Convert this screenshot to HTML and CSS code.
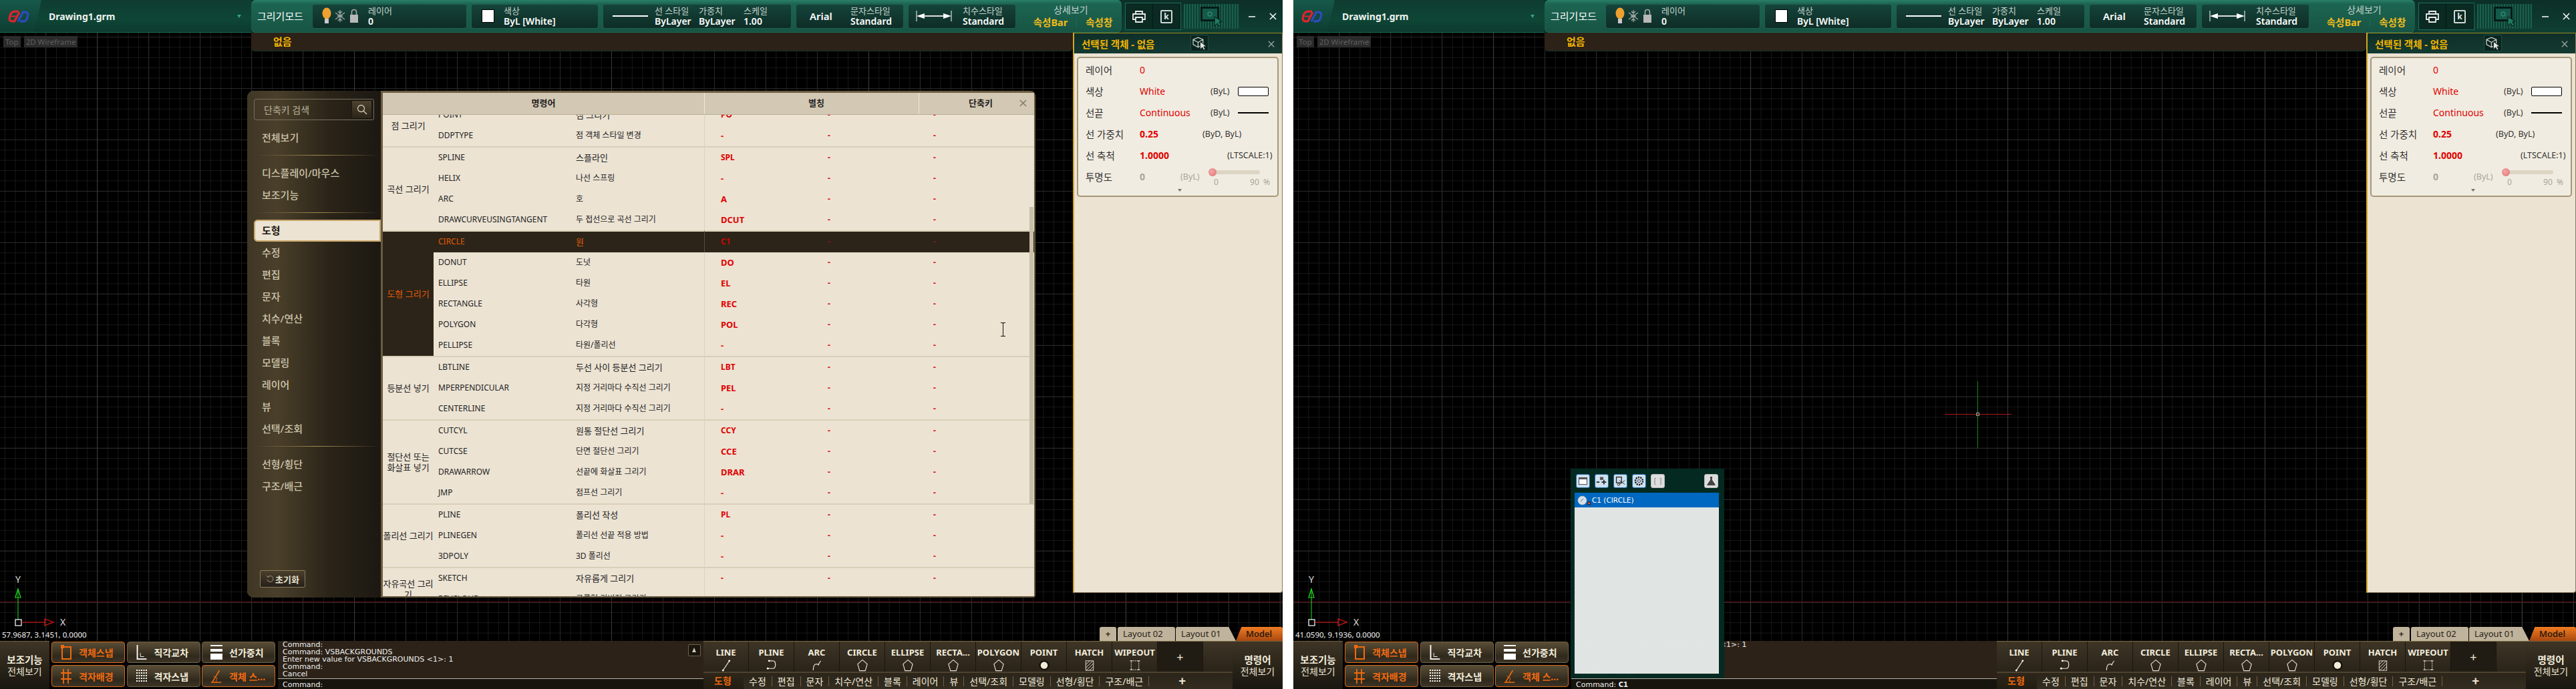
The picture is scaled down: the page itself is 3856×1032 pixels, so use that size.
FILE: index.html
```html
<!DOCTYPE html>
<html lang="ko">
<head>
    <meta charset="UTF-8">
    <title>Drawing1.grm</title>
    <link rel="stylesheet" href="styles.css">
</head>
<body>

<svg class="defs" width="0" height="0">
    <symbol id="i-logo" viewBox="0 0 30 18">
        <path d="M15 2 H10 Q5 2 3 7 L2 11 Q1 16 6 16 H9 L16 3" fill="none" stroke="#e0242c" stroke-width="3"/>
        <path d="M14 16 L21 3 H24 Q29 3 28 8 L27 11 Q26 16 21 16 H17" fill="none" stroke="#2c4cc0" stroke-width="3"/>
        <path d="M4 9 H11" stroke="#e0242c" stroke-width="2"/>
    </symbol>
    <symbol id="i-bulb" viewBox="0 0 14 26">
        <ellipse cx="7" cy="9" rx="6.5" ry="8.5" fill="#f0a030"/>
        <rect x="4" y="17" width="6" height="7" fill="#c9c9c9"/>
    </symbol>
    <symbol id="i-snow" viewBox="0 0 16 20">
        <path d="M8 1 V19 M1 5 L15 15 M15 5 L1 15 M4 10 H12 M5 3 L8 6 L11 3 M5 17 L8 14 L11 17" stroke="#a0a8a4" stroke-width="1.3" fill="none"/>
    </symbol>
    <symbol id="i-lock" viewBox="0 0 14 22">
        <path d="M3.5 10 V5 Q3.5 1.5 7 1.5 Q10.5 1.5 10.5 5 V10" stroke="#a8a8a8" stroke-width="1.6" fill="none"/>
        <rect x="1" y="9" width="12" height="12" fill="#b8b8b8"/>
    </symbol>
    <symbol id="i-dim" viewBox="0 0 54 16">
        <path d="M1 0 V16 M53 0 V16" stroke="#fff" stroke-width="1"/>
        <path d="M1 8 L13 4 V12 Z M53 8 L41 4 V12 Z" fill="#fff"/>
        <path d="M12 8 H42" stroke="#ddd" stroke-width="2"/>
    </symbol>
    <symbol id="i-print" viewBox="0 0 20 18">
        <path d="M5 5 V1 H15 V5 M5 13 H1 V5 H19 V13 H15 M5 10 H15 V17 H5 Z" fill="none" stroke="#e8e8e8" stroke-width="1.8"/>
    </symbol>
    <symbol id="i-pick" viewBox="0 0 32 30">
        <rect x="1.5" y="1.5" width="25" height="19" fill="#15594a" stroke="#04140f" stroke-width="2.6"/>
        <circle cx="14" cy="11" r="3" fill="none" stroke="#2c8a70" stroke-width="1.4"/>
        <path d="M21 15 V29 L25 25 L28 29 L31 27 L27.5 23 L32 22 Z" fill="#1d7a62" stroke="#04140f"/>
    </symbol>
    <symbol id="i-x" viewBox="0 0 12 12">
        <path d="M1 1 L11 11 M11 1 L1 11" stroke="currentColor" stroke-width="1.6" fill="none"/>
    </symbol>
    <symbol id="i-cube" viewBox="0 0 20 20">
        <path d="M8 2 L15 5 V12 L8 16 L1 12 V5 Z M1 5 L8 9 L15 5 M8 9 V16" fill="none" stroke="#c8d0cc" stroke-width="1.2"/>
        <path d="M11 8 V19 L14 16 L16 20 L18 19 L16 15 L20 15 Z" fill="#e8e8e8" stroke="#0a241e" stroke-width=".8"/>
    </symbol>
    <symbol id="i-search" viewBox="0 0 16 16">
        <circle cx="6.5" cy="6.5" r="5" fill="none" stroke="#cfc6ad" stroke-width="1.3"/>
        <path d="M10 10 L15 15" stroke="#cfc6ad" stroke-width="1.5"/>
    </symbol>
    <symbol id="i-reset" viewBox="0 0 12 12">
        <path d="M3 3 A4.5 4.5 0 1 1 2 7 M1 1 L3 3.5 L5.5 2.5" fill="none" stroke="#8a7f66" stroke-width="1.1"/>
    </symbol>
    <symbol id="i-osnap" viewBox="0 0 18 24">
        <rect x="3" y="4" width="13" height="18" fill="none" stroke="#ef6a10" stroke-width="2"/>
        <rect x="1" y="1" width="5" height="5" fill="#ef6a10"/>
    </symbol>
    <symbol id="i-ortho" viewBox="0 0 18 26">
        <path d="M2 1 V24 H17" fill="none" stroke="#fff" stroke-width="2"/>
        <path d="M7 14 V20 H13" fill="none" stroke="#fff"/>
    </symbol>
    <symbol id="i-weight" viewBox="0 0 18 24">
        <rect x="0" y="1" width="18" height="2" fill="#fff"/>
        <rect x="0" y="7" width="18" height="4" fill="#fff"/>
        <rect x="0" y="14" width="18" height="9" fill="#fff"/>
    </symbol>
    <symbol id="i-gridbg" viewBox="0 0 18 24">
        <path d="M5 1 V23 M12 1 V23 M1 7 H17 M1 16 H17" stroke="#ef6a10" stroke-width="1.8"/>
    </symbol>
    <symbol id="i-gridsnap" viewBox="0 0 18 24">
        <path d="M1 3 H17 M1 7 H17 M1 11 H17 M1 15 H17 M1 19 H17" stroke="#fff" stroke-width="1.8" stroke-dasharray="2 1.5"/>
    </symbol>
    <symbol id="i-angle" viewBox="0 0 20 24">
        <path d="M1 22 H18 M3 22 L15 2" fill="none" stroke="#ef6a10" stroke-width="1.8"/>
        <path d="M5 12 L11 15 L9 22" fill="none" stroke="#ef6a10"/>
    </symbol>
    <symbol id="i-line" viewBox="0 0 16 20">
        <path d="M3 18 L13 3" stroke="#e8e2d2" stroke-width="1.2"/>
        <circle cx="3" cy="18" r="1.5" fill="#fff"/><circle cx="13" cy="3" r="1.5" fill="#fff"/>
    </symbol>
    <symbol id="i-pline" viewBox="0 0 18 20">
        <path d="M5 3 H11 Q15 3 15 9 Q15 15 11 15 H3" fill="none" stroke="#e8e2d2" stroke-width="1.3"/>
        <circle cx="3" cy="15" r="1.5" fill="#fff"/><circle cx="5" cy="3" r="1.5" fill="#fff"/>
    </symbol>
    <symbol id="i-arc" viewBox="0 0 18 20">
        <path d="M3 18 Q3 8 8 8 Q11 8 11 10 Q12 6 15 3" fill="none" stroke="#e8e2d2" stroke-width="1.2"/>
    </symbol>
    <symbol id="i-penta" viewBox="0 0 18 20">
        <path d="M9 1.5 L16.5 8 L13.5 18.5 H4.5 L1.5 8 Z" fill="none" stroke="#e8e2d2" stroke-width="1.2"/>
    </symbol>
    <symbol id="i-point" viewBox="0 0 18 20">
        <circle cx="9" cy="10" r="8" fill="#14110b"/><circle cx="9" cy="10" r="5.5" fill="#f0ecd8"/>
    </symbol>
    <symbol id="i-hatch" viewBox="0 0 18 20">
        <rect x="3" y="3" width="12" height="15" fill="none" stroke="#e8e2d2"/>
        <path d="M3 9 L9 3 M3 14 L14 3 M4 18 L15 7 M9 18 L15 12" stroke="#e8e2d2"/>
    </symbol>
    <symbol id="i-wipe" viewBox="0 0 18 20">
        <rect x="3" y="3" width="12" height="14" fill="none" stroke="#e8e2d2" stroke-dasharray="2 1"/>
        <path d="M1 3 H5 M13 3 H17 M1 17 H5 M13 17 H17" stroke="#fff"/>
    </symbol>
    <symbol id="i-ucs" viewBox="0 0 100 84">
        <path d="M12 24 V69" stroke="#20e020"/>
        <path d="M12 23 L8 36 H16 Z" fill="none" stroke="#20e020" stroke-width="1.2"/>
        <rect x="8" y="69" width="9" height="9" fill="none" stroke="#fff" stroke-width="1.2"/>
        <path d="M17 73 H52" stroke="#f01818" stroke-width="1.2"/>
        <path d="M65 73 L52 68 V78 Z" fill="none" stroke="#f01818" stroke-width="1.2"/>
    </symbol>
</svg>

<div class="win win-a">
    <header class="topbar">
        <div class="doc">
            <div class="doc-logo"><svg class="logo"><use href="#i-logo"/></svg></div>
            <span class="doc-name">Drawing1.grm</span>
            <span class="doc-caret"></span>
        </div>
        <div class="toolbar">
            <div class="mode">그리기모드</div>
            <div class="card c-layer">
                <svg class="ic-bulb"><use href="#i-bulb"/></svg>
                <svg class="ic-snow"><use href="#i-snow"/></svg>
                <svg class="ic-lock"><use href="#i-lock"/></svg>
                <div class="stack"><small>레이어</small><b>0</b></div>
            </div>
            <div class="card c-color">
                <i class="swatch"></i>
                <div class="stack"><small>색상</small><b>ByL [White]</b></div>
            </div>
            <div class="card c-line">
                <i class="lineprev"></i>
                <div class="stack w66"><small>선 스타일</small><b>ByLayer</b></div>
                <div class="stack w67"><small>가중치</small><b>ByLayer</b></div>
                <div class="stack"><small>스케일</small><b>1.00</b></div>
            </div>
            <div class="card c-text">
                <b class="font-name">Arial</b>
                <div class="stack"><small>문자스타일</small><b>Standard</b></div>
            </div>
            <div class="card c-dim">
                <svg class="ic-dim"><use href="#i-dim"/></svg>
                <div class="stack"><small>치수스타일</small><b>Standard</b></div>
            </div>
            <div class="detail">
                <span>상세보기</span>
                <div class="detail-links"><a>속성Bar</a><i></i><a>속성창</a></div>
            </div>
        </div>
        <div class="winctl">
            <div class="tools">
                <div class="tool"><svg class="ic-print"><use href="#i-print"/></svg></div>
                <div class="tool"><span class="key">k</span></div>
            </div>
            <div class="grip"><svg class="ic-pick"><use href="#i-pick"/></svg></div>
            <svg class="ic-min" viewBox="0 0 10 2"><path d="M0 1 H10" stroke="#fff" stroke-width="1.5"/></svg>
            <svg class="ic-close"><use href="#i-x"/></svg>
        </div>
    </header>

    <main class="stage">
        <div class="subbar">없음</div>
        <div class="viewtags"><span>Top</span><span>2D Wireframe</span></div>
        <div class="redline"></div>
        <svg class="ucs"><use href="#i-ucs"/><text x="12" y="14" text-anchor="middle">Y</text><text x="75" y="78">X</text></svg>
        <div class="coords">57.9687, 3.1451, 0.0000</div>

        <section class="dialog">
            <nav class="side">
                <div class="search"><span>단축키 검색</span><button class="search-btn"><svg><use href="#i-search"/></svg></button></div>
                <a class="side-item first">전체보기</a>
                <hr class="side-div">
                <a class="side-item">디스플레이/마우스</a>
                <a class="side-item">보조기능</a>
                <hr class="side-div">
                <a class="side-item on">도형</a>
                <a class="side-item">수정</a>
                <a class="side-item">편집</a>
                <a class="side-item">문자</a>
                <a class="side-item">치수/연산</a>
                <a class="side-item">블록</a>
                <a class="side-item">모델링</a>
                <a class="side-item">레이어</a>
                <a class="side-item">뷰</a>
                <a class="side-item">선택/조회</a>
                <hr class="side-div">
                <a class="side-item">선형/횡단</a>
                <a class="side-item">구조/배근</a>
                <button class="reset"><svg><use href="#i-reset"/></svg>초기화</button>
            </nav>
            <div class="pane">
                <div class="pane-head"><span>명령어</span><span class="h2">별칭</span><span class="h3">단축키</span></div>
                <svg class="pane-close"><use href="#i-x"/></svg>
                <div class="pane-body">
                    <table class="cmds">
                        <colgroup><col class="c1"><col class="c2"><col class="c3"><col class="c4"><col class="c5"><col class="c6"></colgroup>
                        <tr><td rowspan="2" class="grp">점 그리기</td><td>POINT</td><td>점 그리기</td><td class="al">PO</td><td class="ds">-</td><td class="ds">-</td></tr>
                        <tr><td>DDPTYPE</td><td>점 객체 스타일 변경</td><td class="al">-</td><td class="ds">-</td><td class="ds">-</td></tr>

                        <tr class="gs"><td rowspan="4" class="grp">곡선 그리기</td><td>SPLINE</td><td>스플라인</td><td class="al">SPL</td><td class="ds">-</td><td class="ds">-</td></tr>
                        <tr><td>HELIX</td><td>나선 스프링</td><td class="al">-</td><td class="ds">-</td><td class="ds">-</td></tr>
                        <tr><td>ARC</td><td>호</td><td class="al">A</td><td class="ds">-</td><td class="ds">-</td></tr>
                        <tr><td>DRAWCURVEUSINGTANGENT</td><td>두 접선으로 곡선 그리기</td><td class="al">DCUT</td><td class="ds">-</td><td class="ds">-</td></tr>

                        <tr class="gs sel"><td rowspan="6" class="grp cur">도형 그리기</td><td>CIRCLE</td><td>원</td><td class="al">C1</td><td class="ds">-</td><td class="ds">-</td></tr>
                        <tr><td>DONUT</td><td>도넛</td><td class="al">DO</td><td class="ds">-</td><td class="ds">-</td></tr>
                        <tr><td>ELLIPSE</td><td>타원</td><td class="al">EL</td><td class="ds">-</td><td class="ds">-</td></tr>
                        <tr><td>RECTANGLE</td><td>사각형</td><td class="al">REC</td><td class="ds">-</td><td class="ds">-</td></tr>
                        <tr><td>POLYGON</td><td>다각형</td><td class="al">POL</td><td class="ds">-</td><td class="ds">-</td></tr>
                        <tr><td>PELLIPSE</td><td>타원/폴리선</td><td class="al">-</td><td class="ds">-</td><td class="ds">-</td></tr>

                        <tr class="gs"><td rowspan="3" class="grp">등분선 넣기</td><td>LBTLINE</td><td>두선 사이 등분선 그리기</td><td class="al">LBT</td><td class="ds">-</td><td class="ds">-</td></tr>
                        <tr><td>MPERPENDICULAR</td><td>지정 거리마다 수직선 그리기</td><td class="al">PEL</td><td class="ds">-</td><td class="ds">-</td></tr>
                        <tr><td>CENTERLINE</td><td>지정 거리마다 수직선 그리기</td><td class="al">-</td><td class="ds">-</td><td class="ds">-</td></tr>

                        <tr class="gs"><td rowspan="4" class="grp">절단선 또는<br>화살표 넣기</td><td>CUTCYL</td><td>원통 절단선 그리기</td><td class="al">CCY</td><td class="ds">-</td><td class="ds">-</td></tr>
                        <tr><td>CUTCSE</td><td>단면 절단선 그리기</td><td class="al">CCE</td><td class="ds">-</td><td class="ds">-</td></tr>
                        <tr><td>DRAWARROW</td><td>선끝에 화살표 그리기</td><td class="al">DRAR</td><td class="ds">-</td><td class="ds">-</td></tr>
                        <tr><td>JMP</td><td>점프선 그리기</td><td class="al">-</td><td class="ds">-</td><td class="ds">-</td></tr>

                        <tr class="gs"><td rowspan="3" class="grp">폴리선 그리기</td><td>PLINE</td><td>폴리선 작성</td><td class="al">PL</td><td class="ds">-</td><td class="ds">-</td></tr>
                        <tr><td>PLINEGEN</td><td>폴리선 선끝 적용 방법</td><td class="al">-</td><td class="ds">-</td><td class="ds">-</td></tr>
                        <tr><td>3DPOLY</td><td>3D 폴리선</td><td class="al">-</td><td class="ds">-</td><td class="ds">-</td></tr>

                        <tr class="gs"><td rowspan="2" class="grp">자유곡선 그리기</td><td>SKETCH</td><td>자유롭게 그리기</td><td class="al">-</td><td class="ds">-</td><td class="ds">-</td></tr>
                        <tr><td>REVCLOUD</td><td>구름형 리비전 그리기</td><td class="al">-</td><td class="ds">-</td><td class="ds">-</td></tr>
                    </table>
                </div>
                <div class="scrollbar"></div>
            </div>
        </section>
        <svg class="ibeam" viewBox="0 0 7 21"><path d="M0 .5 H7 M0 20.5 H7 M3.5 0 V21" stroke="#111"/></svg>

        <aside class="props">
            <div class="props-head"><span>선택된 객체 - 없음</span><div class="cube"><svg><use href="#i-cube"/></svg></div><svg class="props-x"><use href="#i-x"/></svg></div>
            <div class="props-card">
                <div class="pr"><label>레이어</label><span class="v">0</span></div>
                <div class="pr"><label>색상</label><span class="v w106">White</span><span class="by w41">(ByL)</span><i class="pr-swatch"></i></div>
                <div class="pr"><label>선끝</label><span class="v w106">Continuous</span><span class="by w41">(ByL)</span><i class="pr-line"></i></div>
                <div class="pr"><label>선 가중치</label><strong class="v w94">0.25</strong><span class="by">(ByD, ByL)</span></div>
                <div class="pr"><label>선 축척</label><strong class="v w131">1.0000</strong><span class="by">(LTSCALE:1)</span></div>
                <div class="pr"><label>투명도</label><strong class="v off w61">0</strong><span class="by off w43">(ByL)</span>
                    <div class="slider"><div class="track"><i></i></div><div class="slider-nums"><span>0</span><span>90 &nbsp;%</span></div></div>
                </div>
                <i class="more"></i>
            </div>
        </aside>

        <div class="layouts"><span class="lt plus">+</span><span class="lt">Layout 02</span><span class="lt l1">Layout 01</span><span class="lt model">Model</span></div>
    </main>

    <footer class="bottom">
        <div class="aux"><b>보조기능</b><span>전체보기</span></div>
        <div class="btns">
            <button class="tog on"><svg><use href="#i-osnap"/></svg>객체스냅</button>
            <button class="tog"><svg><use href="#i-ortho"/></svg>직각교차</button>
            <button class="tog"><svg><use href="#i-weight"/></svg>선가중치</button>
            <button class="tog on"><svg><use href="#i-gridbg"/></svg>격자배경</button>
            <button class="tog"><svg><use href="#i-gridsnap"/></svg>격자스냅</button>
            <button class="tog on"><svg><use href="#i-angle"/></svg>객체 스...</button>
        </div>
        <div class="cmdline">
            <div class="log">Command:<br>Command: VSBACKGROUNDS<br>Enter new value for VSBACKGROUNDS &lt;1&gt;: 1<br>Command:<br>Cancel</div>
            <div class="input">Command:</div>
            <i class="log-up"></i>
        </div>
        <div class="ribbon">
            <div class="rb-row">
                <div class="rb"><b>LINE</b><svg><use href="#i-line"/></svg></div>
                <div class="rb"><b>PLINE</b><svg><use href="#i-pline"/></svg></div>
                <div class="rb"><b>ARC</b><svg><use href="#i-arc"/></svg></div>
                <div class="rb"><b>CIRCLE</b><svg><use href="#i-penta"/></svg></div>
                <div class="rb"><b>ELLIPSE</b><svg><use href="#i-penta"/></svg></div>
                <div class="rb"><b>RECTA...</b><svg><use href="#i-penta"/></svg></div>
                <div class="rb"><b>POLYGON</b><svg><use href="#i-penta"/></svg></div>
                <div class="rb"><b>POINT</b><svg><use href="#i-point"/></svg></div>
                <div class="rb"><b>HATCH</b><svg><use href="#i-hatch"/></svg></div>
                <div class="rb"><b>WIPEOUT</b><svg><use href="#i-wipe"/></svg></div>
                <div class="rb rb-add">+</div>
            </div>
            <div class="rb-tabs">
                <a class="tab on">도형</a><a class="tab">수정</a><a class="tab">편집</a><a class="tab">문자</a><a class="tab">치수/연산</a><a class="tab">블록</a><a class="tab">레이어</a><a class="tab">뷰</a><a class="tab">선택/조회</a><a class="tab">모델링</a><a class="tab">선형/횡단</a><a class="tab">구조/배근</a><a class="tab"></a><a class="tab add">+</a>
            </div>
        </div>
        <div class="allcmd"><b>명령어</b><span>전체보기</span></div>
    </footer>
</div>

<div class="win win-b">
    <header class="topbar">
        <div class="doc">
            <div class="doc-logo"><svg class="logo"><use href="#i-logo"/></svg></div>
            <span class="doc-name">Drawing1.grm</span>
            <span class="doc-caret"></span>
        </div>
        <div class="toolbar">
            <div class="mode">그리기모드</div>
            <div class="card c-layer">
                <svg class="ic-bulb"><use href="#i-bulb"/></svg>
                <svg class="ic-snow"><use href="#i-snow"/></svg>
                <svg class="ic-lock"><use href="#i-lock"/></svg>
                <div class="stack"><small>레이어</small><b>0</b></div>
            </div>
            <div class="card c-color">
                <i class="swatch"></i>
                <div class="stack"><small>색상</small><b>ByL [White]</b></div>
            </div>
            <div class="card c-line">
                <i class="lineprev"></i>
                <div class="stack w66"><small>선 스타일</small><b>ByLayer</b></div>
                <div class="stack w67"><small>가중치</small><b>ByLayer</b></div>
                <div class="stack"><small>스케일</small><b>1.00</b></div>
            </div>
            <div class="card c-text">
                <b class="font-name">Arial</b>
                <div class="stack"><small>문자스타일</small><b>Standard</b></div>
            </div>
            <div class="card c-dim">
                <svg class="ic-dim"><use href="#i-dim"/></svg>
                <div class="stack"><small>치수스타일</small><b>Standard</b></div>
            </div>
            <div class="detail">
                <span>상세보기</span>
                <div class="detail-links"><a>속성Bar</a><i></i><a>속성창</a></div>
            </div>
        </div>
        <div class="winctl">
            <div class="tools">
                <div class="tool"><svg class="ic-print"><use href="#i-print"/></svg></div>
                <div class="tool"><span class="key">k</span></div>
            </div>
            <div class="grip"><svg class="ic-pick"><use href="#i-pick"/></svg></div>
            <svg class="ic-min" viewBox="0 0 10 2"><path d="M0 1 H10" stroke="#fff" stroke-width="1.5"/></svg>
            <svg class="ic-close"><use href="#i-x"/></svg>
        </div>
    </header>

    <main class="stage">
        <div class="subbar">없음</div>
        <div class="viewtags"><span>Top</span><span>2D Wireframe</span></div>
        <div class="redline"></div>
        <svg class="ucs"><use href="#i-ucs"/><text x="12" y="14" text-anchor="middle">Y</text><text x="75" y="78">X</text></svg>
        <div class="coords">41.0590, 9.1936, 0.0000</div>
        <div class="crosshair"><i class="ch-h"></i><i class="ch-v"></i><i class="ch-box"></i></div>

        <aside class="props">
            <div class="props-head"><span>선택된 객체 - 없음</span><div class="cube"><svg><use href="#i-cube"/></svg></div><svg class="props-x"><use href="#i-x"/></svg></div>
            <div class="props-card">
                <div class="pr"><label>레이어</label><span class="v">0</span></div>
                <div class="pr"><label>색상</label><span class="v w106">White</span><span class="by w41">(ByL)</span><i class="pr-swatch"></i></div>
                <div class="pr"><label>선끝</label><span class="v w106">Continuous</span><span class="by w41">(ByL)</span><i class="pr-line"></i></div>
                <div class="pr"><label>선 가중치</label><strong class="v w94">0.25</strong><span class="by">(ByD, ByL)</span></div>
                <div class="pr"><label>선 축척</label><strong class="v w131">1.0000</strong><span class="by">(LTSCALE:1)</span></div>
                <div class="pr"><label>투명도</label><strong class="v off w61">0</strong><span class="by off w43">(ByL)</span>
                    <div class="slider"><div class="track"><i></i></div><div class="slider-nums"><span>0</span><span>90 &nbsp;%</span></div></div>
                </div>
                <i class="more"></i>
            </div>
        </aside>

        <div class="layouts"><span class="lt plus">+</span><span class="lt">Layout 02</span><span class="lt l1">Layout 01</span><span class="lt model">Model</span></div>
    </main>

    <footer class="bottom">
        <div class="aux"><b>보조기능</b><span>전체보기</span></div>
        <div class="btns">
            <button class="tog on"><svg><use href="#i-osnap"/></svg>객체스냅</button>
            <button class="tog"><svg><use href="#i-ortho"/></svg>직각교차</button>
            <button class="tog"><svg><use href="#i-weight"/></svg>선가중치</button>
            <button class="tog on"><svg><use href="#i-gridbg"/></svg>격자배경</button>
            <button class="tog"><svg><use href="#i-gridsnap"/></svg>격자스냅</button>
            <button class="tog on"><svg><use href="#i-angle"/></svg>객체 스...</button>
        </div>
        <div class="cmdline">
            <div class="log">Enter new value for VSBACKGROUNDS &lt;1&gt;: 1<br>Command:<br>Cancel<br>Command:<br>Opposite corner:</div>
            <div class="input">Command: <span class="typed">C1</span></div>
        </div>
        <div class="ribbon">
            <div class="rb-row">
                <div class="rb"><b>LINE</b><svg><use href="#i-line"/></svg></div>
                <div class="rb"><b>PLINE</b><svg><use href="#i-pline"/></svg></div>
                <div class="rb"><b>ARC</b><svg><use href="#i-arc"/></svg></div>
                <div class="rb"><b>CIRCLE</b><svg><use href="#i-penta"/></svg></div>
                <div class="rb"><b>ELLIPSE</b><svg><use href="#i-penta"/></svg></div>
                <div class="rb"><b>RECTA...</b><svg><use href="#i-penta"/></svg></div>
                <div class="rb"><b>POLYGON</b><svg><use href="#i-penta"/></svg></div>
                <div class="rb"><b>POINT</b><svg><use href="#i-point"/></svg></div>
                <div class="rb"><b>HATCH</b><svg><use href="#i-hatch"/></svg></div>
                <div class="rb"><b>WIPEOUT</b><svg><use href="#i-wipe"/></svg></div>
                <div class="rb rb-add">+</div>
            </div>
            <div class="rb-tabs">
                <a class="tab on">도형</a><a class="tab">수정</a><a class="tab">편집</a><a class="tab">문자</a><a class="tab">치수/연산</a><a class="tab">블록</a><a class="tab">레이어</a><a class="tab">뷰</a><a class="tab">선택/조회</a><a class="tab">모델링</a><a class="tab">선형/횡단</a><a class="tab">구조/배근</a><a class="tab"></a><a class="tab add">+</a>
            </div>
        </div>
        <div class="allcmd"><b>명령어</b><span>전체보기</span></div>
    </footer>

    <div class="popup">
        <div class="pop-tools">
            <span class="pop-btn"><svg viewBox="0 0 20 20"><rect x="3" y="4" width="14" height="12" fill="#fff" stroke="#333"/><rect x="3" y="4" width="14" height="3" fill="#555"/></svg></span>
            <span class="pop-btn"><svg viewBox="0 0 20 20"><path d="M1 12 H6 M14 8 V16 M10 12 H18" stroke="#222" stroke-width="2"/><rect x="7" y="3" width="6" height="5" fill="#555"/></svg></span>
            <span class="pop-btn"><svg viewBox="0 0 20 20"><rect x="3" y="3" width="9" height="10" fill="none" stroke="#222" stroke-width="1.5"/><path d="M8 16 L18 9 M8 9 L18 16" stroke="#222"/><circle cx="7" cy="16" r="2" fill="none" stroke="#222"/></svg></span>
            <span class="pop-btn"><svg viewBox="0 0 20 20"><circle cx="10" cy="10" r="6.5" fill="none" stroke="#222" stroke-width="3" stroke-dasharray="2.5 1.5"/><circle cx="10" cy="10" r="2.5" fill="none" stroke="#222"/></svg></span>
            <span class="pop-btn dis">[ ]</span>
            <span class="pop-btn dis last"><svg viewBox="0 0 20 20"><path d="M8 3 H12 M9 3 V8 L3 17 H17 L11 8 V3 Z" fill="#444" stroke="#333"/></svg></span>
        </div>
        <div class="pop-list">
            <div class="pop-row"><svg viewBox="0 0 26 20"><circle cx="10" cy="10" r="7.5" fill="#d8dfe8" stroke="#ccc"/><path d="M7 12 L12 7" stroke="#2060a0"/><rect x="20" y="13" width="4.5" height="4.5" fill="#f05040" stroke="#111"/></svg>C1 (CIRCLE)</div>
        </div>
    </div>
</div>

</body>
</html>
```

FILE: styles.css
```css
* {
    box-sizing: border-box;
}

body {
    margin: 0;
    width: 3856px;
    height: 1032px;
    display: flex;
    gap: 16px;
    background-color: #fff;
    overflow: hidden;
    font-family: "Noto Sans", "Noto Sans CJK KR", sans-serif;
    font-size: 13px;
}

.defs {
    position: absolute;
}

button {
    font-family: inherit;
    padding: 0;
}

.win {
    position: relative;
    width: 1920px;
    height: 1032px;
    display: flex;
    flex-direction: column;
    background-color: #000;
}

/* top */
.topbar {
    height: 49px;
    display: flex;
    flex: none;
    background-color: #0b2a23;
    color: #fff;
}

.doc {
    width: 376px;
    display: flex;
    align-items: center;
    position: relative;
    background: linear-gradient(#0f3c31, #0e4636 60%, #0c3a2e);
    border-bottom: 1px solid #1f6a55;
}

.doc-logo {
    width: 62px;
    height: 48px;
    flex: none;
    display: flex;
    align-items: center;
    padding-left: 12px;
    background: linear-gradient(#16594a, #0e3d31);
    clip-path: polygon(0 0, 100% 0, 82% 100%, 0 100%);
}

.logo {
    width: 32px;
    height: 19px;
}

.doc-name {
    margin-left: 11px;
    font-size: 14px;
    font-weight: 700;
    color: #eef3ef;
}

.doc-caret {
    position: absolute;
    left: 355px;
    top: 22px;
    border-left: 3px solid transparent;
    border-right: 3px solid transparent;
    border-top: 5px solid #3aa088;
}

.toolbar {
    width: 1303px;
    display: flex;
    align-items: center;
    gap: 6px;
    background: linear-gradient(#2a7f68, #1c6552 12%, #185443);
    border-radius: 6px;
    border-bottom: 1px solid #1f6a55;
}

.mode {
    width: 85px;
    padding-left: 9px;
    flex: none;
    font-size: 15px;
    line-height: 20px;
}

.card {
    height: 37px;
    display: flex;
    align-items: center;
    flex: none;
    border: 1px solid #1e5f4e;
    border-radius: 4px;
    background: linear-gradient(#15443a, #0e2d26);
}

.c-layer {
    width: 232px;
    padding-left: 14px;
}

.c-color {
    width: 191px;
    padding-left: 15px;
}

.c-line {
    width: 283px;
    padding-left: 14px;
}

.c-text {
    width: 162px;
    padding-left: 20px;
}

.c-dim {
    width: 162px;
    padding-left: 11px;
}

.stack {
    display: flex;
    flex-direction: column;
    white-space: nowrap;
}

.stack small {
    font-size: 13px;
    line-height: 15px;
    color: #c3d2cc;
}

.stack b {
    font-size: 14px;
    line-height: 16px;
    font-weight: 600;
}

.w66 {
    width: 66px;
}

.w67 {
    width: 67px;
}

.ic-bulb {
    width: 14px;
    height: 26px;
}

.ic-snow {
    width: 16px;
    height: 20px;
    margin-left: 5px;
}

.ic-lock {
    width: 14px;
    height: 22px;
    margin-left: 6px;
    margin-right: 14px;
}

.swatch {
    width: 19px;
    height: 20px;
    background-color: #fff;
    border: 1px solid #000;
    margin-right: 14px;
}

.lineprev {
    width: 53px;
    height: 2px;
    background-color: #fff;
    margin-right: 10px;
}

.font-name {
    width: 61px;
    font-size: 15px;
    font-weight: 600;
}

.ic-dim {
    width: 54px;
    height: 16px;
    margin-right: 16px;
}

.detail {
    width: 152px;
    text-align: center;
    color: #c3d2cc;
}

.detail span {
    display: block;
    font-size: 14px;
    line-height: 19px;
}

.detail-links {
    display: flex;
    justify-content: center;
    align-items: center;
    gap: 13px;
    padding-left: 6px;
    color: #f2bb1a;
    font-size: 14.5px;
    font-weight: 700;
    line-height: 19px;
}

.detail-links i {
    width: 1px;
    height: 12px;
    background-color: #1e6b58;
}

.winctl {
    flex: 1;
    display: flex;
    align-items: center;
    background: linear-gradient(#0c2f27, #0f3f33);
    padding-left: 5px;
}

.tools {
    width: 84px;
    height: 41px;
    display: flex;
    flex: none;
    border: 1px solid #1c7059;
    background-color: #0a2a22;
}

.tool {
    flex: 1;
    display: flex;
    align-items: center;
    justify-content: center;
    border-right: 1px solid #06181a;
}

.ic-print {
    width: 20px;
    height: 18px;
}

.key {
    width: 18px;
    height: 20px;
    border: 2px solid #d0d8d4;
    border-radius: 2px;
    font-size: 12px;
    font-weight: 700;
    line-height: 15px;
    text-align: center;
    color: #e8e8e8;
}

.grip {
    width: 82px;
    height: 37px;
    margin-left: 4px;
    flex: none;
    display: flex;
    align-items: center;
    justify-content: center;
    background: repeating-linear-gradient(90deg, #1a5f4c 0 2px, #0f3f33 2px 4px);
}

.ic-pick {
    width: 32px;
    height: 30px;
}

.ic-min {
    width: 10px;
    height: 2px;
    margin-left: 15px;
}

.ic-close {
    width: 11px;
    height: 11px;
    margin-left: 21px;
    color: #fff;
}

/* canvas */
.stage {
    position: relative;
    flex: 1;
    background-color: #000;
    background-image:
        linear-gradient(90deg, #3a3a3a 1px, transparent 1px),
        linear-gradient(90deg, #292929 1px, transparent 1px),
        linear-gradient(#292929 1px, transparent 1px),
        linear-gradient(90deg, #181818 1px, transparent 1px),
        linear-gradient(#181818 1px, transparent 1px);
    background-size: 385px 100%, 77px 100%, 100% 77px, 15.4px 100%, 100% 15.4px;
    background-position: 145px 0, 68px 0, 0 6px, 7px 0, 0 6px;
}

.win-b .stage {
    background-position: 299px 0, 68px 0, 0 6px, 7px 0, 0 6px;
}

.subbar {
    position: relative;
    margin-left: 376px;
    width: 1230px;
    height: 28px;
    padding-left: 33px;
    background-color: #2c2218;
    border-radius: 0 0 6px 6px;
    border-bottom: 1px solid #12302a;
    color: #f2b400;
    font-size: 15px;
    font-weight: 700;
    line-height: 27px;
}

.viewtags {
    position: absolute;
    left: 5px;
    top: 5px;
    display: flex;
    gap: 5px;
}

.viewtags span {
    height: 17px;
    padding: 0 3px;
    background-color: #2b2b2b;
    color: #5e5e5e;
    font-size: 11.5px;
    line-height: 17px;
}

.redline {
    position: absolute;
    left: 0;
    right: 0;
    top: 852px;
    height: 1px;
    background-color: #560d0d;
}

.ucs {
    position: absolute;
    left: 15px;
    top: 810px;
    width: 100px;
    height: 84px;
}

.ucs text {
    fill: #ddd;
    font-size: 14px;
}

.coords {
    position: absolute;
    left: 3px;
    top: 894px;
    color: #eee;
    font-size: 11.5px;
    line-height: 16px;
}

.crosshair {
    position: absolute;
    left: 975px;
    top: 522px;
    width: 100px;
    height: 100px;
}

.crosshair i {
    position: absolute;
}

.ch-h {
    left: 0;
    right: 0;
    top: 49px;
    height: 1px;
    background-color: #b01818;
}

.ch-v {
    top: 0;
    bottom: 0;
    left: 49px;
    width: 1px;
    background-color: #127a12;
}

.ch-box {
    left: 47px;
    top: 47px;
    width: 5px;
    height: 5px;
    border: 1px solid #999;
}

/* shortcut dialog */
.dialog {
    position: absolute;
    left: 370px;
    top: 87px;
    width: 1180px;
    height: 759px;
    display: flex;
    color: #222;
    border-radius: 10px 8px 4px 10px;
    overflow: hidden;
    background-color: #6a5c40;
}

.side {
    width: 200px;
    flex: none;
    display: flex;
    flex-direction: column;
    padding: 12px 0 15px 10px;
    background: linear-gradient(90deg, #3f3625, #4a3f2a 22%, #2a2418 62%, #1c1812);
}

.search {
    width: 180px;
    height: 32px;
    display: flex;
    align-items: center;
    justify-content: space-between;
    padding: 0 2px 0 14px;
    border: 1px solid #76705f;
    border-radius: 3px;
    color: #a59d87;
    font-size: 14px;
    font-weight: 500;
}

.search-btn {
    width: 31px;
    height: 28px;
    display: flex;
    align-items: center;
    justify-content: center;
    background: linear-gradient(#4f4330, #2b2418);
    border: 1px solid #1b170f;
}

.search-btn svg {
    width: 16px;
    height: 16px;
}

.side-item {
    display: block;
    height: 33px;
    padding-left: 12px;
    color: #cdc4ab;
    font-size: 15px;
    font-weight: 500;
    line-height: 33px;
}

.side-item.first {
    margin-top: 9.5px;
}

.side-item.on {
    background-color: #ece3d3;
    color: #1c1812;
    font-weight: 700;
    border-radius: 6px 0 0 6px;
    box-shadow: inset 0 0 0 2px #c9a66a;
}

.side-div {
    width: 100%;
    height: 1px;
    margin: 9.5px 0;
    border: 0;
    background: linear-gradient(90deg, transparent 1%, #a58a4e 50%, transparent);
}

.reset {
    margin-top: auto;
    margin-left: 9px;
    width: 68px;
    height: 26px;
    display: flex;
    align-items: center;
    justify-content: center;
    gap: 2px;
    background: linear-gradient(#4a3f2b, #26201a);
    border: 1px solid #8a7a58;
    border-radius: 2px;
    color: #e8e1cf;
    font-size: 13px;
    font-weight: 700;
}

.reset svg {
    width: 12px;
    height: 12px;
}

.pane {
    position: relative;
    flex: 1;
    margin: 3px 2px 2px 3px;
    display: flex;
    flex-direction: column;
    background-color: #ece3d3;
    border-radius: 3px 3px 0 0;
}

.pane-head {
    height: 33px;
    flex: none;
    display: grid;
    grid-template-columns: 481px 322px 172px;
    background-color: #d3c8b3;
    border-bottom: 1px solid #b9ad94;
    font-size: 13px;
    font-weight: 700;
    line-height: 31px;
    text-align: center;
}

.pane-head .h2 {
    padding-left: 14px;
    border-left: 1px solid #efe8d8;
    border-right: 1px solid #efe8d8;
}

.pane-head .h3 {
    padding-left: 74px;
    text-align: left;
}

.pane-close {
    position: absolute;
    right: 11px;
    top: 10px;
    width: 11px;
    height: 11px;
    color: #7f7767;
}

.pane-body {
    flex: 1;
    overflow: hidden;
}

.cmds {
    width: 975px;
    margin-top: -15.5px;
    table-layout: fixed;
    border-collapse: separate;
    border-spacing: 0;
    font-size: 12px;
}

.c1 {
    width: 76px;
}

.c2 {
    width: 206px;
}

.c3 {
    width: 199px;
}

.c4 {
    width: 178px;
}

.c5 {
    width: 158px;
}

.c6 {
    width: 158px;
}

.cmds td {
    height: 31px;
    padding: 0 0 0 7px;
    line-height: 16px;
    white-space: nowrap;
    overflow: hidden;
}

.cmds td:nth-last-child(3) {
    padding-left: 24px;
    border-left: 1px solid #ddd3bf;
}

.cmds td:nth-child(3) {
    font-size: 13px;
}

.cmds .gs td {
    height: 33px;
    border-top: 2px solid #d9cfb9;
}

.cmds td.grp {
    padding: 0;
    text-align: center;
    font-size: 13px;
    white-space: normal;
}

.cmds td.al,
.cmds td.ds {
    color: #e00000;
    font-weight: 700;
}

.cmds td.cur {
    background-color: #2c2418;
    color: #e25a08;
}

.cmds .sel td {
    background-color: #2c2418;
    color: #e25a08;
}

.cmds .sel td.al {
    color: #e00000;
    font-weight: 600;
    border-left-color: #5a4d36;
}

.cmds .sel td.ds {
    color: #a01010;
}

.scrollbar {
    position: absolute;
    right: 1px;
    top: 171px;
    width: 6px;
    height: 445px;
    background-color: #c9bfa9;
}

.ibeam {
    position: absolute;
    left: 1498px;
    top: 434px;
    width: 7px;
    height: 21px;
}

/* properties */
.props {
    position: absolute;
    right: 0;
    top: 0;
    width: 314px;
    height: 839px;
    background-color: #ece3d3;
    border-left: 2px solid #d0a820;
    border-bottom: 1px solid #8a7a58;
    border-right: 1px solid #8a7a58;
    border-radius: 0 0 4px 0;
}

.props-head {
    position: relative;
    height: 31px;
    display: flex;
    align-items: center;
    padding-left: 11px;
    background: linear-gradient(#0f2f28, #143a31);
    border-top: 1px solid #a08a20;
    color: #f2b400;
    font-size: 14.5px;
    font-weight: 700;
}

.cube {
    position: absolute;
    left: 174px;
    top: 2px;
    width: 27px;
    height: 25px;
    display: flex;
    align-items: center;
    justify-content: center;
    background-color: #0b241e;
    border: 1px solid #1b4f42;
    border-radius: 2px;
}

.cube svg {
    width: 21px;
    height: 21px;
}

.props-x {
    position: absolute;
    right: 11px;
    top: 11px;
    width: 10px;
    height: 10px;
    color: #9aa6a0;
}

.props-card {
    position: relative;
    margin: 5px 5px 0 4px;
    height: 210px;
    padding: 2px 0 0 11px;
    background-color: #f1ece1;
    border: 2px solid #a59878;
    border-radius: 5px;
}

.pr {
    height: 32px;
    display: flex;
    align-items: center;
    line-height: 18px;
    color: #333;
}

.pr label {
    width: 81px;
    flex: none;
    font-size: 14.5px;
}

.pr .v {
    color: #e00000;
    font-size: 14px;
}

.pr strong.v {
    font-weight: 700;
}

.pr .by {
    font-size: 12.5px;
    white-space: nowrap;
}

.pr .off {
    color: #aaa59a;
}

.w106 {
    width: 106px;
}

.w94 {
    width: 94px;
}

.w131 {
    width: 131px;
}

.w61 {
    width: 61px;
}

.w41 {
    width: 41px;
}

.w43 {
    width: 43px;
}

.pr-swatch {
    width: 46px;
    height: 14px;
    background-color: #fff;
    border: 1px solid #000;
    border-radius: 2px;
}

.pr-line {
    width: 46px;
    height: 2px;
    background-color: #000;
}

.slider {
    width: 91px;
    padding-top: 6px;
    flex: none;
}

.track {
    position: relative;
    width: 76px;
    height: 6px;
    background-color: #ddd5c4;
    border-radius: 3px;
}

.track i {
    position: absolute;
    left: -1px;
    top: -3px;
    width: 12px;
    height: 12px;
    border-radius: 50%;
    background: radial-gradient(circle at 40% 40%, #f4a8a8, #dd6f6f);
}

.slider-nums {
    display: flex;
    justify-content: space-between;
    padding: 4px 0 0 7px;
    color: #aaa59a;
    font-size: 12px;
    line-height: 16px;
}

.more {
    position: absolute;
    left: 149px;
    bottom: 6px;
    border-left: 3px solid transparent;
    border-right: 3px solid transparent;
    border-top: 4px solid #7a7466;
}

.layouts {
    position: absolute;
    right: 0;
    bottom: 0;
    height: 21px;
    display: flex;
    gap: 1px;
}

.lt {
    width: 86px;
    padding-left: 8px;
    background-color: #bfb39b;
    border-radius: 3px 3px 0 0;
    color: #2a2418;
    font-size: 13px;
    line-height: 21px;
}

.lt.plus {
    width: 25px;
    padding: 0;
    margin-right: 1px;
    text-align: center;
    font-weight: 700;
}

.lt.l1 {
    width: 90px;
    clip-path: polygon(0 0, 88% 0, 100% 100%, 0 100%);
}

.lt.model {
    width: 70px;
    margin-left: -1px;
    padding-left: 15px;
    background: linear-gradient(#f07c22, #a8480f);
    clip-path: polygon(12% 0, 100% 0, 100% 100%, 0 100%);
    color: #1c1208;
    font-weight: 500;
}

/* bottom */
.bottom {
    height: 72px;
    flex: none;
    display: flex;
    background-color: #000;
}

.aux,
.allcmd {
    display: flex;
    flex-direction: column;
    align-items: center;
    justify-content: center;
    background: linear-gradient(#3e3526, #2b2519 50%, #191510);
    border-top: 1px solid #6e5f40;
    color: #e8e1cf;
    font-size: 14px;
    line-height: 18px;
}

.aux {
    width: 74px;
    flex: none;
}

.aux b,
.allcmd b {
    font-size: 14.5px;
    font-weight: 700;
    color: #f2ecdc;
}

.btns {
    width: 340px;
    flex: none;
    padding: 1px 0 2px 3px;
    display: grid;
    grid-template-columns: repeat(3, 110px);
    grid-template-rows: 32px 33px;
    gap: 3px 2.5px;
}

.tog {
    display: flex;
    align-items: center;
    padding-left: 12px;
    gap: 10px;
    background: linear-gradient(#5a4d36, #2f291c 70%, #3c3425);
    border: 1px solid #6e6148;
    border-radius: 4px;
    color: #f2ecdc;
    font-size: 14px;
    font-weight: 700;
    white-space: nowrap;
}

.tog svg {
    width: 18px;
    height: 24px;
    flex: none;
}

.tog.on {
    border-color: #d8691c;
    color: #ef6a10;
}

.cmdline {
    position: relative;
    width: 637px;
    flex: none;
    margin-left: 2px;
    display: flex;
    flex-direction: column;
    background-color: #2c2218;
    color: #eee;
    font-family: "DejaVu Sans", sans-serif;
    font-size: 11px;
}

.log {
    height: 56px;
    padding: 0 7px;
    line-height: 11px;
    white-space: nowrap;
}

.input {
    flex: 1;
    padding: 3px 7px 0;
    background-color: #17130d;
    border-top: 1px solid #b5b1a8;
    line-height: 12px;
}

.typed {
    font-weight: 700;
    font-size: 10px;
}

.log-up {
    position: absolute;
    right: 4px;
    top: 5px;
    width: 19px;
    height: 18px;
    background-color: #1a160f;
    border: 1px solid #6e6148;
    border-radius: 2px;
}

.log-up::after {
    content: "";
    position: absolute;
    left: 5px;
    top: 4px;
    border-left: 3.5px solid transparent;
    border-right: 3.5px solid transparent;
    border-bottom: 7px solid #cfc6ad;
}

.ribbon {
    width: 792px;
    flex: none;
    display: flex;
    flex-direction: column;
    background: linear-gradient(#3e3526, #2a2419 60%, #332c1f);
    border-top: 1px solid #7a6a44;
}

.rb-row {
    height: 47px;
    display: flex;
    border-bottom: 2px solid #4d4330;
}

.rb {
    width: 68px;
    padding-top: 7px;
    display: flex;
    flex-direction: column;
    align-items: center;
    flex: none;
    border-right: 1px solid #1a160f;
    color: #f2ecdc;
}

.rb b {
    font-size: 13px;
    line-height: 18px;
    font-weight: 700;
    white-space: nowrap;
}

.rb svg {
    width: 18px;
    height: 20px;
    margin-top: 1px;
}

.rb-add {
    justify-content: center;
    padding: 0;
    background-color: #211c13;
    font-size: 18px;
    line-height: 1;
}

.rb-tabs {
    flex: 1;
    display: flex;
    align-items: center;
}

.tab {
    padding: 0 8px;
    border-right: 1px solid #6e6148;
    color: #efe9d8;
    font-size: 14px;
    line-height: 15px;
    white-space: nowrap;
}

.tab.on {
    width: 60px;
    padding: 0 0 0 16px;
    height: 24px;
    line-height: 24px;
    color: #ef6a10;
    font-weight: 700;
    background: linear-gradient(#2e2619, #221c12);
    border-right: 0;
    border-top-right-radius: 10px;
}

.tab.add {
    border: 0;
    padding-left: 27px;
    font-size: 19px;
    font-weight: 700;
}

.allcmd {
    width: 75px;
    flex: none;
}

/* list popup over the command line, see-through like the original */
.popup {
    position: absolute;
    left: 415px;
    top: 702px;
    width: 230px;
    height: 314px;
    padding: 0 8px 7px 6px;
    display: flex;
    flex-direction: column;
    background-color: rgba(3, 43, 34, .96);
}

.pop-tools {
    height: 36px;
    flex: none;
    display: flex;
    align-items: center;
    gap: 7px;
    padding-left: 2px;
}

.pop-btn {
    width: 21px;
    height: 21px;
    display: flex;
    align-items: center;
    justify-content: center;
    background-color: #cfe0ee;
    border: 1px solid #1c6aa8;
    border-radius: 3px;
}

.pop-btn svg {
    width: 17px;
    height: 17px;
}

.pop-btn.dis {
    background-color: #ddd;
    border-color: #bbb;
    color: #888;
    font-size: 11px;
    font-family: "DejaVu Sans", sans-serif;
}

.pop-btn.last {
    margin-left: auto;
    margin-right: 1px;
}

.pop-list {
    flex: 1;
    background-color: rgba(255, 255, 255, .88);
}

.pop-row {
    height: 22px;
    display: flex;
    align-items: center;
    padding-left: 3px;
    gap: 1px;
    background-color: #0068c0;
    color: #fff;
    font-family: "DejaVu Sans", sans-serif;
    font-size: 10.5px;
}

.pop-row svg {
    width: 22px;
    height: 17px;
}
```
